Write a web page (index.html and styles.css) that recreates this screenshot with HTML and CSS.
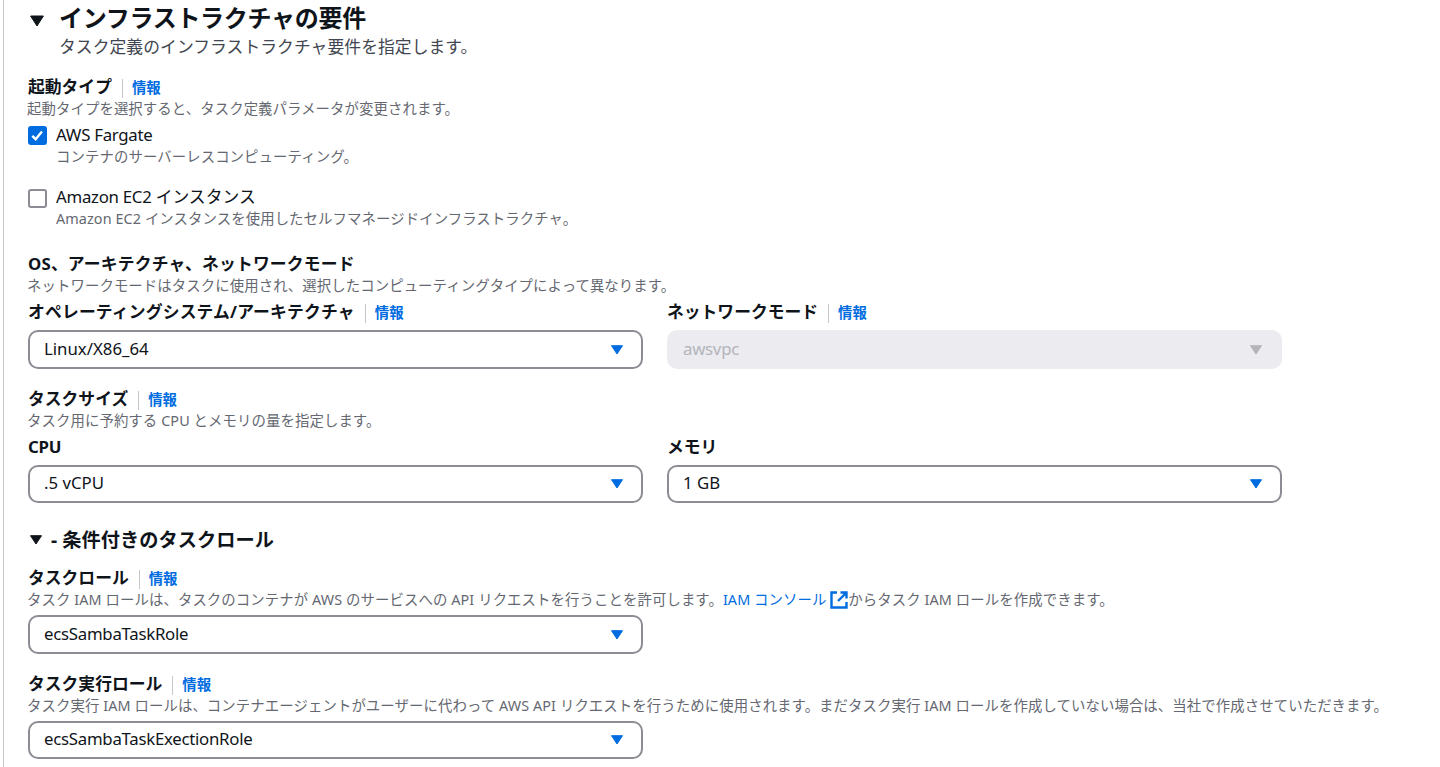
FILE: index.html
```html
<!DOCTYPE html>
<html lang="ja">
<head>
    <meta charset="UTF-8">
    <meta name="viewport" content="width=device-width, initial-scale=1.0">
    <title>タスク定義の作成</title>
    <link rel="stylesheet" href="styles.css">
</head>
<body>
    <div class="container">
        <header class="header">
            <svg class="caret caret-large" viewBox="0 0 16 14"><path d="M1.6 2h12.8L8 12z"/></svg>
            <div>
                <h2>インフラストラクチャの要件</h2>
                <p>タスク定義のインフラストラクチャ要件を指定します。</p>
            </div>
        </header>

        <section class="launch-type">
            <div class="label">起動タイプ<a class="info" href="#">情報</a></div>
            <p class="description">起動タイプを選択すると、タスク定義パラメータが変更されます。</p>
            <div class="checkbox-item">
                <span class="checkbox checked"><svg viewBox="0 0 19 19"><path d="M4.3 9.8l3.4 3.4 6.3-7.6"/></svg></span>
                <div>
                    <div class="checkbox-label"><span class="latin">AWS Fargate</span></div>
                    <p class="description">コンテナのサーバーレスコンピューティング。</p>
                </div>
            </div>
            <div class="checkbox-item">
                <span class="checkbox"></span>
                <div>
                    <div class="checkbox-label"><span class="latin">Amazon EC2 </span>インスタンス</div>
                    <p class="description">Amazon EC2 インスタンスを使用したセルフマネージドインフラストラクチャ。</p>
                </div>
            </div>
        </section>

        <section class="os">
            <div class="label wide">OS、アーキテクチャ、ネットワークモード</div>
            <p class="description">ネットワークモードはタスクに使用され、選択したコンピューティングタイプによって異なります。</p>
            <div class="row">
                <div class="form-group">
                    <div class="label wide">オペレーティングシステム/アーキテクチャ<a class="info" href="#">情報</a></div>
                    <div class="select"><span>Linux/X86_64</span><svg class="caret" viewBox="0 0 14 12"><path d="M1.5 1.7h11L7 10z"/></svg></div>
                </div>
                <div class="form-group">
                    <div class="label">ネットワークモード<a class="info" href="#">情報</a></div>
                    <div class="select disabled"><span class="latin">awsvpc</span><svg class="caret" viewBox="0 0 14 12"><path d="M1.5 1.7h11L7 10z"/></svg></div>
                </div>
            </div>
        </section>

        <section class="task-size">
            <div class="label">タスクサイズ<a class="info" href="#">情報</a></div>
            <p class="description">タスク用に予約する CPU とメモリの量を指定します。</p>
            <div class="row">
                <div class="form-group">
                    <div class="label latin">CPU</div>
                    <div class="select short"><span>.5 vCPU</span><svg class="caret" viewBox="0 0 14 12"><path d="M1.5 1.7h11L7 10z"/></svg></div>
                </div>
                <div class="form-group">
                    <div class="label">メモリ</div>
                    <div class="select short"><span>1 GB</span><svg class="caret" viewBox="0 0 14 12"><path d="M1.5 1.7h11L7 10z"/></svg></div>
                </div>
            </div>
        </section>

        <section class="roles">
            <h3><svg class="caret" viewBox="0 0 14 12"><path d="M1.5 1.7h11L7 10z"/></svg><span>- 条件付きのタスクロール</span></h3>
            <div class="role">
                <div class="label">タスクロール<a class="info" href="#">情報</a></div>
                <p class="description">タスク IAM ロールは、タスクのコンテナが AWS のサービスへの API リクエストを行うことを許可します。<a href="#">IAM コンソール <svg class="external" viewBox="0 0 18 18"><path d="M7 1.5H1.5v15h15V11M10.5 1.5h6v6M16 2L8 10"/></svg></a>からタスク IAM ロールを作成できます。</p>
                <div class="select"><span class="latin">ecsSambaTaskRole</span><svg class="caret" viewBox="0 0 14 12"><path d="M1.5 1.7h11L7 10z"/></svg></div>
            </div>
            <div class="role">
                <div class="label">タスク実行ロール<a class="info" href="#">情報</a></div>
                <p class="description">タスク実行 IAM ロールは、コンテナエージェントがユーザーに代わって AWS API リクエストを行うために使用されます。まだタスク実行 IAM ロールを作成していない場合は、当社で作成させていただきます。</p>
                <div class="select short"><span class="latin">ecsSambaTaskExectionRole</span><svg class="caret" viewBox="0 0 14 12"><path d="M1.5 1.7h11L7 10z"/></svg></div>
            </div>
        </section>
    </div>
</body>
</html>
```
FILE: styles.css
```css
* {
    box-sizing: border-box;
}

body {
    margin: 0;
    background-color: #fff;
    color: #0f141a;
    font-family: "Noto Sans", "Noto Sans CJK JP", sans-serif;
    font-size: 16.8px;
    line-height: 24px;
    overflow: hidden;
}

h2, h3, p {
    margin: 0;
}

a {
    color: #006ce0;
    text-decoration: none;
}

.container {
    height: 767px;
    margin-left: 3px;
    padding: 4px 0 0 24px;
    border-left: 1px solid #c6c6cd;
}

.header {
    display: flex;
    height: 71px;
}

.header h2 {
    font-size: 24px;
    line-height: 28px;
    letter-spacing: -0.28px;
}

.header p {
    line-height: 30px;
    letter-spacing: 0.06px;
    color: #424650;
}

.latin {
    letter-spacing: -0.26px;
}

.caret {
    width: 14px;
    height: 12px;
    fill: #006ce0;
    stroke: #006ce0;
    stroke-linejoin: round;
}

.caret-large {
    width: 16px;
    height: 14px;
    margin: 10px 14px 0 1px;
    fill: #0f141a;
    stroke: #0f141a;
}

.label {
    display: flex;
    height: 24px;
    font-weight: bold;
}

.label.wide {
    letter-spacing: 0.18px;
}

.info {
    height: 19px;
    margin: 4px 0 0 10px;
    padding-left: 9px;
    border-left: 1px solid #c6c6cd;
    font-size: 14.4px;
    line-height: 18px;
    letter-spacing: 0;
}

.description {
    height: 19px;
    margin-left: -1px;
    font-size: 14.4px;
    line-height: 19px;
    letter-spacing: 0.09px;
    color: #656871;
    white-space: nowrap;
}

.launch-type {
    height: 177px;
}

.checkbox-item {
    display: flex;
    gap: 9px;
    margin-top: 5px;
}

.checkbox-item .description {
    margin-left: 0;
}

.checkbox-item + .checkbox-item {
    margin-top: 19px;
}

.checkbox {
    width: 19px;
    height: 19px;
    margin-top: 3px;
    border: 2px solid #8c8c94;
    border-radius: 3px;
}

.checkbox-item + .checkbox-item .checkbox {
    margin-top: 4px;
}

.checkbox.checked {
    border: none;
    background-color: #006ce0;
}

.checkbox svg {
    display: block;
    fill: none;
    stroke: #fff;
    stroke-width: 2.4;
}

.row {
    display: flex;
    gap: 24px;
    margin-top: 5px;
}

.form-group {
    width: 615px;
}

.select {
    display: flex;
    justify-content: space-between;
    align-items: center;
    width: 615px;
    height: 39px;
    margin-top: 6px;
    padding: 0 17px 0 14px;
    border: 2px solid #8c8c94;
    border-radius: 10px;
}

.select span {
    padding-bottom: 2px;
}

.select.short {
    height: 38px;
}

.select.disabled {
    background-color: #ebebf0;
    border-color: #ebebf0;
    color: #b4b4bb;
}

.disabled .caret {
    fill: #b4b4bb;
    stroke: #b4b4bb;
}

.os {
    height: 135px;
}

.task-size {
    height: 141px;
}

.roles h3 {
    display: flex;
    align-items: center;
    gap: 8px;
    height: 24px;
    margin-bottom: 14px;
    font-size: 19.2px;
    letter-spacing: 0.06px;
}

.roles h3 .caret {
    margin-left: 1px;
    fill: #0f141a;
    stroke: #0f141a;
}

.role {
    height: 106px;
}

.external {
    width: 18px;
    height: 18px;
    vertical-align: -4px;
    fill: none;
    stroke: #006ce0;
    stroke-width: 2.4;
}
```
